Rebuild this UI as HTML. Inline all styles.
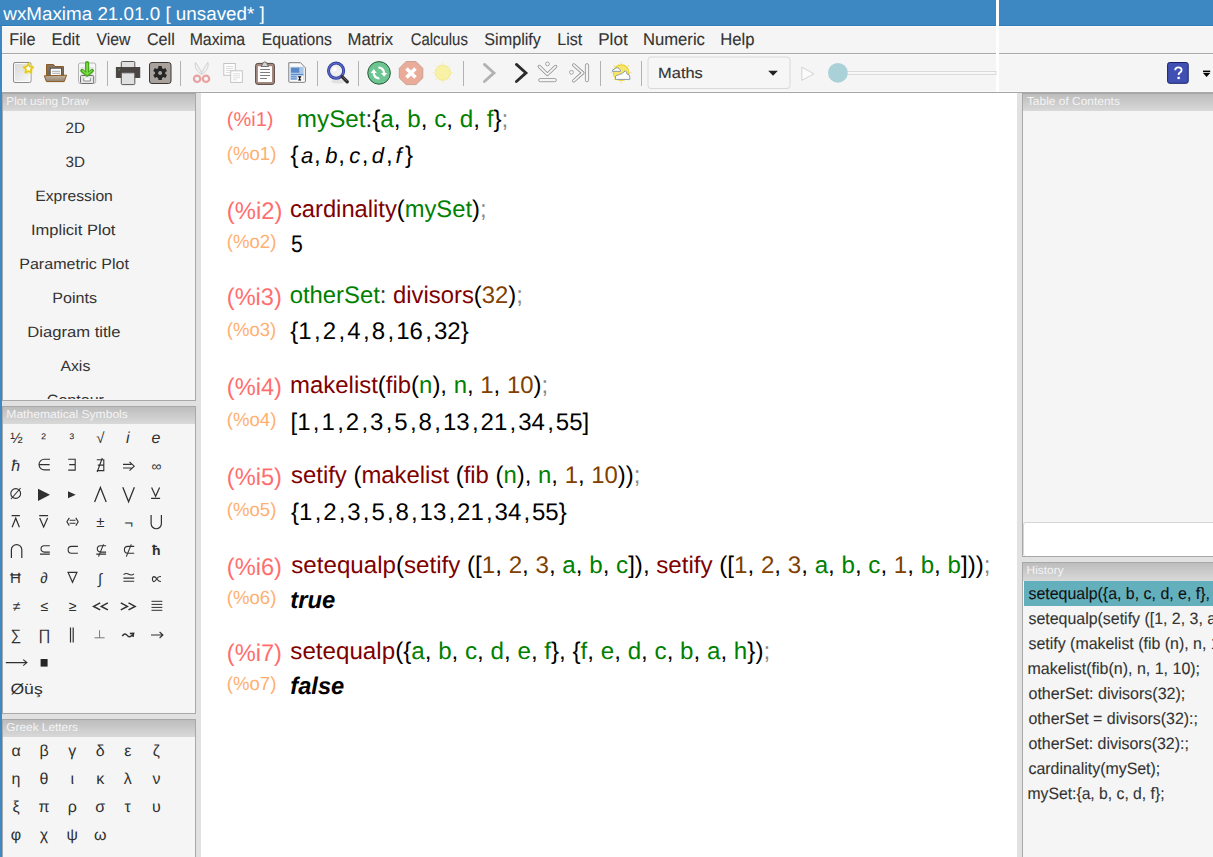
<!DOCTYPE html>
<html><head><meta charset="utf-8"><title>wxMaxima</title>
<style>
html,body{margin:0;padding:0;width:1213px;height:857px;overflow:hidden;background:#f5f5f5;font-family:"Liberation Sans",sans-serif;}
.a{position:absolute;}
svg{position:absolute;left:0;top:0;}
</style></head><body>
<svg width="1213" height="857" viewBox="0 0 1213 857" font-family="Liberation Sans, sans-serif" text-rendering="geometricPrecision">
<defs>
  <linearGradient id="cap" x1="0" y1="0" x2="0" y2="1">
    <stop offset="0" stop-color="#bdbdbd"/><stop offset="1" stop-color="#d9d9d9"/>
  </linearGradient>
  <clipPath id="clipDraw"><rect x="3" y="111" width="192" height="288"/></clipPath>
  <clipPath id="clipRight"><rect x="1023" y="93" width="190" height="764"/></clipPath>
</defs>
<!-- title bar -->
<rect x="0" y="0" width="1213" height="25" fill="#3d88c3"/>
<rect x="0" y="25" width="1213" height="1" fill="#2f7bb8"/>
<!-- menubar -->
<rect x="0" y="26" width="1213" height="27" fill="#f5f5f5"/>
<rect x="0" y="26" width="1213" height="1" fill="#fdfdfd"/>
<rect x="0" y="53" width="1213" height="1" fill="#a9a9a9"/>
<!-- toolbar -->
<rect x="0" y="54" width="1213" height="38" fill="#f5f5f5"/>
<rect x="0" y="54" width="1213" height="1" fill="#fafafa"/>
<rect x="0" y="91" width="1213" height="1" fill="#f9f9f9"/>
<rect x="0" y="92" width="1213" height="1" fill="#a6a6a6"/>
<!-- left blue strip -->
<rect x="0" y="26" width="2" height="831" fill="#3d88c3"/>
<!-- left dock -->
<rect x="2" y="93" width="199" height="764" fill="#e1e1e1"/>
<rect x="2" y="93" width="194" height="308" fill="#a8a8a8"/>
<rect x="3" y="94" width="192" height="17" fill="url(#cap)"/>
<rect x="3" y="111" width="192" height="289" fill="#f5f5f5"/>
<rect x="2" y="406" width="194" height="308" fill="#a8a8a8"/>
<rect x="3" y="407" width="192" height="17" fill="url(#cap)"/>
<rect x="3" y="424" width="192" height="289" fill="#f5f5f5"/>
<rect x="2" y="719" width="194" height="138" fill="#a8a8a8"/>
<rect x="3" y="720" width="192" height="17" fill="url(#cap)"/>
<rect x="3" y="737" width="192" height="120" fill="#f5f5f5"/>
<!-- worksheet -->
<rect x="201" y="93" width="816" height="764" fill="#ffffff"/>
<!-- right dock -->
<rect x="1017" y="93" width="196" height="764" fill="#e1e1e1"/>
<rect x="1022" y="93" width="191" height="464" fill="#a8a8a8"/>
<rect x="1023" y="94" width="190" height="17" fill="url(#cap)"/>
<rect x="1023" y="111" width="190" height="445" fill="#f5f5f5"/>
<rect x="1023" y="522" width="200" height="34" rx="3" fill="#d6d6d6"/>
<rect x="1024" y="523" width="199" height="33" rx="2" fill="#ffffff"/>
<rect x="1022" y="562" width="191" height="295" fill="#a8a8a8"/>
<rect x="1023" y="563" width="190" height="18" fill="url(#cap)"/>
<rect x="1023" y="581" width="190" height="276" fill="#f5f5f5"/>
<rect x="1024" y="581" width="189" height="25" fill="#64afbc"/>
<!-- white vertical line at top -->
<rect x="996" y="0" width="3" height="92" fill="#ffffff"/>
<g id="toolbar">
<defs>
  <linearGradient id="pg" x1="0" y1="0" x2="1" y2="1"><stop offset="0" stop-color="#d6d6d6"/><stop offset="1" stop-color="#fafafa"/></linearGradient>
  <linearGradient id="fb" x1="0" y1="0" x2="0" y2="1"><stop offset="0" stop-color="#8b7560"/><stop offset="1" stop-color="#6e604f"/></linearGradient>
  <linearGradient id="ff" x1="0" y1="0" x2="0" y2="1"><stop offset="0" stop-color="#c7b9a6"/><stop offset="1" stop-color="#8f7f6b"/></linearGradient>
</defs>
<!-- new document -->
<rect x="13.5" y="62.5" width="17.5" height="20" rx="1.5" fill="url(#pg)" stroke="#8c8c8c" stroke-width="1"/>
<rect x="14.5" y="63.5" width="15.5" height="18" rx="1" fill="none" stroke="#ffffff" stroke-width="1" opacity="0.8"/>
<circle cx="28.4" cy="68.6" r="5.8" fill="#f0e070" opacity="0.35"/>
<path d="M28.40 63.60 L29.87 66.58 L33.16 67.05 L30.78 69.37 L31.34 72.65 L28.40 71.10 L25.46 72.65 L26.02 69.37 L23.64 67.05 L26.93 66.58 Z" fill="#ffffff" stroke="#e4cc1a" stroke-width="1.7" stroke-linejoin="round"/>
<!-- open folder -->
<path d="M46.5 81 L46.5 64.5 L53.5 64.5 L55 66.5 L63.5 66.5 L63.5 81 Z" fill="url(#fb)" stroke="#8a5c22" stroke-width="1"/>
<rect x="50.2" y="68.2" width="11.4" height="9" fill="#ffffff" stroke="#3c3c3c" stroke-width="0.8"/>
<rect x="52" y="70.8" width="8" height="0.9" fill="#9aa0a0"/>
<rect x="52" y="72.8" width="8" height="0.9" fill="#9aa0a0"/>
<path d="M44.3 75.8 L66.6 75.2 L64.2 81.6 L46.4 81.6 Z" fill="url(#ff)" stroke="#8a5c22" stroke-width="1" stroke-linejoin="round"/>
<!-- save cabinet -->
<rect x="78.5" y="63" width="17.2" height="20.5" rx="2" fill="#f6f6f6" stroke="#b4b4b4" stroke-width="1"/>
<rect x="80.8" y="67" width="12.6" height="8" fill="#e4e4e4"/>
<rect x="80.5" y="75.5" width="13.2" height="8" rx="1" fill="#e6e6e6" stroke="#6e6e6e" stroke-width="1"/>
<path d="M83.8 78.3 L83.8 81 L90.4 81 L90.4 78.3" fill="#ffffff" stroke="#8a8a8a" stroke-width="1"/>
<path d="M87.1 63 L87.1 74" stroke="#49a81a" stroke-width="4.2" stroke-linecap="round"/>
<path d="M82 70.6 L87.1 75 L92.2 70.6" fill="none" stroke="#49a81a" stroke-width="3.6" stroke-linecap="round" stroke-linejoin="round"/>
<path d="M87.1 63.5 L87.1 73.5" stroke="#7ee04a" stroke-width="1.6" stroke-linecap="round"/>
<path d="M82.5 70.8 L87.1 74.5 L91.7 70.8" fill="none" stroke="#7ee04a" stroke-width="1.2" stroke-linecap="round"/>
<!-- separators -->
<rect x="107" y="61" width="1" height="25" fill="#b2b2b2"/>
<rect x="180" y="61" width="1" height="25" fill="#b2b2b2"/>
<rect x="317" y="61" width="1" height="25" fill="#b2b2b2"/>
<rect x="358" y="61" width="1" height="25" fill="#b2b2b2"/>
<rect x="463" y="61" width="1" height="25" fill="#b2b2b2"/>
<rect x="600" y="61" width="1" height="25" fill="#b2b2b2"/>
<rect x="641" y="61" width="1" height="25" fill="#b2b2b2"/>
<!-- printer -->
<rect x="121.3" y="61.5" width="13.5" height="7" rx="1" fill="#e0e0e0" stroke="#5a5552" stroke-width="1"/>
<rect x="116.3" y="67.5" width="23.5" height="10" fill="#4a4542" stroke="#3a3634" stroke-width="0.8"/>
<rect x="118.5" y="69.2" width="1.2" height="1.2" fill="#3ec060"/>
<rect x="121.3" y="72.8" width="13.5" height="11.8" rx="1" fill="#e0e0e0" stroke="#5a5552" stroke-width="1"/>
<!-- preferences gear -->
<rect x="149.5" y="62.5" width="21.5" height="21" rx="2.5" fill="#a9a19c" stroke="#3c3836" stroke-width="1"/>
<g transform="translate(160.1 73)" fill="#262626">
  <circle r="5.2"/>
  <rect x="-1.8" y="-7" width="3.6" height="14" rx="0.5"/>
  <rect x="-1.8" y="-7" width="3.6" height="14" rx="0.5" transform="rotate(60)"/>
  <rect x="-1.8" y="-7" width="3.6" height="14" rx="0.5" transform="rotate(120)"/>
  <circle r="2" fill="#a9a19c"/>
</g>
<!-- scissors (disabled) -->
<path d="M195.5 62.5 C194 67 197 71 201.2 74.5 L202 73.2 C199.5 69 197.5 65 195.5 62.5 Z" fill="#f3f3f3" stroke="#c4c4c4" stroke-width="0.8"/>
<path d="M207.8 62.5 C209.2 67 206.3 71 202 74.5 L201.2 73.2 C203.8 69 205.8 65 207.8 62.5 Z" fill="#f3f3f3" stroke="#c4c4c4" stroke-width="0.8"/>
<circle cx="197.1" cy="78.8" r="3.2" fill="none" stroke="#e8a2a2" stroke-width="2.2"/>
<circle cx="206" cy="78.8" r="3.2" fill="none" stroke="#e8a2a2" stroke-width="2.2"/>
<!-- copy (disabled) -->
<rect x="223.8" y="63.5" width="11.5" height="11.8" fill="#ffffff" stroke="#c4c4c4" stroke-width="1"/>
<rect x="226" y="66.2" width="7" height="0.7" fill="#cfcfcf"/><rect x="226" y="68.2" width="7" height="0.7" fill="#cfcfcf"/><rect x="226" y="70.2" width="7" height="0.7" fill="#cfcfcf"/><rect x="226" y="72.2" width="4" height="0.7" fill="#cfcfcf"/>
<rect x="230.7" y="70.8" width="11.6" height="11.6" fill="#ffffff" stroke="#c4c4c4" stroke-width="1"/>
<rect x="232.8" y="73.5" width="7.2" height="0.7" fill="#cfcfcf"/><rect x="232.8" y="75.5" width="7.2" height="0.7" fill="#cfcfcf"/><rect x="232.8" y="77.5" width="7.2" height="0.7" fill="#cfcfcf"/><rect x="232.8" y="79.5" width="4" height="0.7" fill="#cfcfcf"/>
<!-- paste clipboard -->
<rect x="255.6" y="63.4" width="18.8" height="21" rx="2.2" fill="#a48a80" stroke="#574943" stroke-width="1"/>
<rect x="257.9" y="66.2" width="14.1" height="15.8" fill="#ffffff"/>
<path d="M261 66.5 L262.5 64.3 A2.3 2.3 0 0 1 267.2 64.3 L268.7 66.5 Z" fill="#d4d4d4" stroke="#555" stroke-width="0.8"/>
<rect x="260.1" y="69.1" width="9.9" height="0.9" fill="#6e6e6e"/>
<rect x="260.1" y="72.1" width="9.9" height="0.9" fill="#6e6e6e"/>
<rect x="260.1" y="75.1" width="9.9" height="0.9" fill="#6e6e6e"/>
<rect x="260.1" y="78.1" width="6.8" height="0.9" fill="#6e6e6e"/>
<!-- export doc -->
<path d="M288.8 62.7 L300.5 62.7 L305.4 67.8 L305.4 81.5 Q305.4 82.3 304.6 82.3 L289.6 82.3 Q288.8 82.3 288.8 81.5 Z" fill="#fbfbfb" stroke="#7c7c7c" stroke-width="1"/>
<rect x="290.3" y="66.8" width="13.4" height="13.2" fill="#aac6e6"/>
<rect x="291" y="67.8" width="8.3" height="4.9" fill="#5a88c6"/>
<rect x="291" y="74" width="12.4" height="0.9" fill="#5a88c6"/>
<rect x="291" y="76.3" width="5.5" height="0.9" fill="#5a88c6"/>
<rect x="291" y="78.4" width="5.5" height="0.9" fill="#5a88c6"/>
<rect x="297.5" y="75.8" width="5.9" height="5.6" fill="#ffffff"/>
<path d="M298.2 76.8 L301.2 76.8 M299.7 76.8 L299.7 80 M298.2 80 L301.2 80" stroke="#000" stroke-width="1.2"/>
<!-- find -->
<ellipse cx="338" cy="81.5" rx="7" ry="2" fill="#000" opacity="0.08"/>
<circle cx="336.1" cy="70.7" r="7.6" fill="#eeeeee" stroke="#2d3c98" stroke-width="3"/>
<circle cx="336.1" cy="70.7" r="7.6" fill="none" stroke="#5a68c8" stroke-width="1.4"/>
<circle cx="334.6" cy="69" r="2.2" fill="#ffffff" opacity="0.9"/>
<path d="M342.3 76.9 L347.2 81.8" stroke="#2e2a28" stroke-width="3.4" stroke-linecap="round"/>
<path d="M342.6 76.6 L346.8 80.8" stroke="#6a625c" stroke-width="1" stroke-linecap="round"/>
<!-- reload -->
<circle cx="379.05" cy="72.9" r="11.3" fill="#6dc592" stroke="#2b5a3b" stroke-width="1"/>
<path d="M378.4 67.7 A5.3 5.3 0 0 1 384.1 73.2" fill="none" stroke="#fff" stroke-width="2.3"/>
<path d="M381 73 L387.2 73 L384.1 76.8 Z" fill="#fff"/>
<path d="M379.4 78.3 A5.3 5.3 0 0 1 373.7 72.8" fill="none" stroke="#fff" stroke-width="2.3"/>
<path d="M370.7 72.9 L376.8 72.9 L373.75 69.1 Z" fill="#fff"/>
<!-- interrupt -->
<path d="M406.1 61.5 L416 61.5 L422.8 68.3 L422.8 77.9 L416 84.6 L406.1 84.6 L399.3 77.9 L399.3 68.3 Z" fill="#e9ac98" stroke="#c4958a" stroke-width="0.8"/>
<path d="M406.5 68.5 L415.5 77.5 M415.5 68.5 L406.5 77.5" stroke="#fff" stroke-width="3.6" stroke-linecap="butt"/>
<!-- sun (disabled) -->
<g stroke="#f6eeb8" stroke-width="1.2">
<path d="M442.8 62.5 L442.8 64 M442.8 81.5 L442.8 83 M432.5 72.7 L434 72.7 M451.5 72.7 L453 72.7 M435.5 65.4 L436.5 66.4 M449.1 79 L450.1 80 M435.5 80 L436.5 79 M449.1 66.4 L450.1 65.4"/>
</g>
<circle cx="442.8" cy="72.7" r="7.6" fill="#f9f1a6" stroke="#f4e88e" stroke-width="1"/>
<!-- chevrons -->
<path d="M484.4 64.4 L494 72.9 L484.4 81.5" fill="none" stroke="#b2b2b2" stroke-width="2.8" stroke-linecap="round" stroke-linejoin="miter"/>
<path d="M516.4 64.4 L526 72.9 L516.4 81.5" fill="none" stroke="#2b2b2b" stroke-width="2.8" stroke-linecap="round" stroke-linejoin="miter"/>
<!-- step down -->
<path d="M539.3 66.5 L547.4 74.4 L555.6 66.5" fill="none" stroke="#8e8e8e" stroke-width="3.4" stroke-linecap="round" stroke-linejoin="round"/>
<path d="M539.3 66.5 L547.4 74.4 L555.6 66.5" fill="none" stroke="#f4f4f4" stroke-width="1.8" stroke-linecap="round" stroke-linejoin="round"/>
<circle cx="547.5" cy="63.9" r="1.9" fill="#fafafa" stroke="#8e8e8e" stroke-width="0.8"/>
<rect x="538.6" y="78.5" width="17.8" height="3.2" rx="1.6" fill="#f4f4f4" stroke="#8e8e8e" stroke-width="0.8"/>
<!-- step to end -->
<path d="M573.8 65 L582.8 72.9 L573.8 80.8" fill="none" stroke="#8e8e8e" stroke-width="3.4" stroke-linecap="round" stroke-linejoin="round"/>
<path d="M573.8 65 L582.8 72.9 L573.8 80.8" fill="none" stroke="#f4f4f4" stroke-width="1.8" stroke-linecap="round" stroke-linejoin="round"/>
<circle cx="571.5" cy="72.3" r="1.9" fill="#fafafa" stroke="#8e8e8e" stroke-width="0.8"/>
<rect x="585.4" y="63.6" width="3.2" height="18.2" rx="1.6" fill="#f4f4f4" stroke="#8e8e8e" stroke-width="0.8"/>
<!-- weather -->
<g stroke="#f2dc50" stroke-width="1.1" opacity="0.8">
<path d="M621.2 62.2 L621.2 63.6 M621.2 81.8 L621.2 83.2 M610.7 72.7 L612.1 72.7 M630.3 72.7 L631.7 72.7 M613.8 65.3 L614.8 66.3 M627.6 79.1 L628.6 80.1 M613.8 80.1 L614.8 79.1 M627.6 66.3 L628.6 65.3"/>
</g>
<circle cx="621.2" cy="72.7" r="7.8" fill="#f6e66c" stroke="#eed22c" stroke-width="1.2"/>
<path d="M612.3 71.3 Q612.3 69.3 614.5 69.2 Q615.4 67.3 617.5 67.8 Q619.3 68 619.8 69.6 Q620.8 70 620.5 71.3 Z" fill="#ffffff" stroke="#6d87a3" stroke-width="0.8"/>
<path d="M615.5 79.4 L615.5 76.5 Q616 75 618.5 75 Q619.5 73.8 621.5 74 L625.3 70.8 Q627 72 627 74 Q629.8 74.2 629.8 77 L629.8 79.4 Z" fill="#ffffff" stroke="#6d87a3" stroke-width="0.8"/>
<!-- combobox -->
<rect x="648" y="57" width="142" height="31.5" rx="3" fill="#f6f6f6" stroke="#d9d9d9" stroke-width="1"/>
<path d="M768.2 70.8 L777.9 70.8 L773.05 75.8 Z" fill="#222"/>
<!-- play -->
<path d="M801.8 67.2 L814 73.8 L801.8 80.4 Z" fill="#fbfbfb" stroke="#cfcfcf" stroke-width="0.9" stroke-linejoin="round"/>
<!-- slider -->
<rect x="840" y="71.5" width="156" height="3" fill="#f8f8f8" stroke="#dadada" stroke-width="1"/>
<circle cx="837.9" cy="72.8" r="9.9" fill="#aad1d8"/>
<!-- help -->
<rect x="1167.6" y="62.5" width="20.6" height="20.8" rx="2" fill="#4050b2" stroke="#1a2168" stroke-width="1"/>
<path d="M1175.2 70.2 Q1175.2 67.4 1178.4 67.4 Q1181.6 67.4 1181.6 70 Q1181.6 71.6 1179.8 72.6 Q1178.6 73.3 1178.6 75" fill="none" stroke="#fff" stroke-width="1.8"/>
<rect x="1177.5" y="76.8" width="2.3" height="2.3" fill="#fff"/>
<!-- toolbar overflow -->
<rect x="1203" y="70.6" width="7.2" height="1.6" fill="#000"/>
<path d="M1203 73 L1210.2 73 L1206.6 77 Z" fill="#000"/>
</g>

<text x="16.4" y="443" font-size="15" text-anchor="middle" fill="#303030" >½</text>
<text x="43.6" y="443" font-size="14" text-anchor="middle" fill="#303030" >²</text>
<text x="71.9" y="443" font-size="14" text-anchor="middle" fill="#303030" >³</text>
<text x="100.4" y="443" font-size="15" text-anchor="middle" fill="#303030" >√</text>
<text x="127.7" y="443" font-size="16" text-anchor="middle" fill="#303030" font-style="italic" >i</text>
<text x="156" y="443" font-size="16" text-anchor="middle" fill="#303030" font-style="italic" >e</text>
<text x="15.7" y="470.7" font-size="16" text-anchor="middle" fill="#303030" font-style="italic" >ħ</text>
<path d="M50 459.3 H44.3 A5.15 5.15 0 0 0 44.3 469.9 H50 M39.2 464.6 H49.6" fill="none" stroke="#303030" stroke-width="1.1" />
<path d="M68.2 459.2 H75.2 V470.1 H68.2 M69.2 464.6 H75.2" fill="none" stroke="#303030" stroke-width="1.1" />
<path d="M96.8 459.7 H103.8 V470.6 H96.8 M97.8 465.1 H103.8 M102.3 458 L97.2 472" fill="none" stroke="#303030" stroke-width="1.1" />
<path d="M123 464.4 H131.5 M123 468 H131.5 M129.5 461.8 L134.2 466.2 L129.5 470.6" fill="none" stroke="#303030" stroke-width="1.1" />
<text x="156.5" y="470.5" font-size="14" text-anchor="middle" fill="#303030" >∞</text>
<path d="M11 499 L20.6 488" fill="none" stroke="#303030" stroke-width="1.1" />
<circle cx="15.7" cy="493.5" r="4.9" fill="none" stroke="#303030" stroke-width="1.1"/>
<path d="M38 488.7 L50 494.8 L38 500.9 Z" fill="#303030" stroke="none" stroke-width="0" />
<path d="M68 491.2 L75.7 494.75 L68 498.3 Z" fill="#303030" stroke="none" stroke-width="0" />
<path d="M94.6 502 L100.4 487.6 L106.2 502" fill="none" stroke="#303030" stroke-width="1.3" />
<path d="M122.8 487.3 L128.6 501.7 L134.4 487.3" fill="none" stroke="#303030" stroke-width="1.3" />
<path d="M151.6 487.5 L155.6 496.3 L159.6 487.5 M151.1 498.3 H160.1" fill="none" stroke="#303030" stroke-width="1.2" />
<path d="M11.6 515.6 H19.9 M12.1 527.2 L15.75 518.2 L19.4 527.2" fill="none" stroke="#303030" stroke-width="1.2" />
<path d="M39.2 515.6 H48.1 M39.7 518 L43.65 527 L47.6 518" fill="none" stroke="#303030" stroke-width="1.2" />
<path d="M69.6 520.2 H75.5 M69.6 523.3 H75.5 M69.3 517.9 L66.9 521.75 L69.3 525.6 M75.8 517.9 L78.2 521.75 L75.8 525.6" fill="none" stroke="#303030" stroke-width="1.1" />
<text x="100.4" y="527" font-size="15" text-anchor="middle" fill="#303030" >±</text>
<text x="128.6" y="527.5" font-size="15" text-anchor="middle" fill="#303030" >¬</text>
<path d="M151.1 514.9 V523.6 A5.15 5.15 0 0 0 161.4 523.6 V514.9" fill="none" stroke="#303030" stroke-width="1.2" />
<path d="M11.4 558.1 V549.8 A5.2 5.2 0 0 1 21.8 549.8 V558.1" fill="none" stroke="#303030" stroke-width="1.2" />
<path d="M49.8 545.7 H44.2 A3.2 3.2 0 0 0 44.2 552.1 H49.8 M40 554.1 H49.8" fill="none" stroke="#303030" stroke-width="1.1" />
<path d="M77.9 546.4 H71.5 A3.4 3.4 0 0 0 71.5 553.2 H77.9" fill="none" stroke="#303030" stroke-width="1.1" />
<path d="M106.1 545.7 H100.5 A3.2 3.2 0 0 0 100.5 552.1 H106.1 M96.3 554.1 H106.1 M103.5 544.4 L98.5 556.6" fill="none" stroke="#303030" stroke-width="1.1" />
<path d="M134.2 546.4 H127.8 A3.4 3.4 0 0 0 127.8 553.2 H134.2 M131.3 544.4 L126.3 556.6" fill="none" stroke="#303030" stroke-width="1.1" />
<text x="156.2" y="554.8" font-size="14" text-anchor="middle" fill="#303030" font-weight="bold" >ħ</text>
<text x="15.5" y="582.6" font-size="15" text-anchor="middle" fill="#303030" >Ħ</text>
<text x="44" y="582.6" font-size="15" text-anchor="middle" fill="#303030" >∂</text>
<path d="M68.1 572.4 H76.9 L72.5 582.2 Z" fill="none" stroke="#303030" stroke-width="1.2" />
<text x="100" y="583.5" font-size="15" text-anchor="middle" fill="#303030" >∫</text>
<path d="M123.6 574.6 Q126 572.6 128.8 574.3 Q131.5 575.9 134 573.9 M123.4 578.1 H134.2 M123.4 581.2 H134.2" fill="none" stroke="#303030" stroke-width="1.1" />
<path d="M160.9 576.6 Q158.2 576.2 156.6 579 Q155 581.8 153.8 581.6 Q152.3 581.3 152.4 579 Q152.5 576.6 154 576.6 Q155.6 576.7 157.2 579.2 Q158.7 581.7 160.9 581.5" fill="none" stroke="#303030" stroke-width="1.1" />
<text x="16.6" y="610.8" font-size="14" text-anchor="middle" fill="#303030" >≠</text>
<text x="44.3" y="611" font-size="14" text-anchor="middle" fill="#303030" >≤</text>
<text x="72.5" y="611" font-size="14" text-anchor="middle" fill="#303030" >≥</text>
<path d="M100.2 602.9 L93.6 606.4 L100.2 609.9 M107.9 602.9 L101.3 606.4 L107.9 609.9" fill="none" stroke="#303030" stroke-width="1.5" />
<path d="M120.8 602.9 L127.4 606.4 L120.8 609.9 M128.5 602.9 L135.1 606.4 L128.5 609.9" fill="none" stroke="#303030" stroke-width="1.5" />
<path d="M151.5 601.3 H162.3 M151.5 604.4 H162.3 M151.5 607.4 H162.3 M151.5 610.3 H162.3" fill="none" stroke="#303030" stroke-width="1.0" />
<text x="15.9" y="640" font-size="15" text-anchor="middle" fill="#303030" >∑</text>
<text x="44.4" y="639.8" font-size="15" text-anchor="middle" fill="#303030" >∏</text>
<path d="M70.5 627.4 V642.5 M73.2 627.4 V642.5" fill="none" stroke="#303030" stroke-width="1.2" />
<path d="M99.55 630.2 V637.8 M94.5 637.8 H104.6" fill="none" stroke="#7a7a7a" stroke-width="1.0" />
<path d="M122.3 636.2 Q124.6 632.2 127.2 635.4 Q129.6 638.4 132.6 634.6 M129.8 633.6 L133.6 633.4 L133 637" fill="none" stroke="#303030" stroke-width="1.5" />
<path d="M151 635 H162.6 M159.6 632 L162.9 635 L159.6 638" fill="none" stroke="#303030" stroke-width="1.1" />
<path d="M5.8 662.6 H26.6 M23.2 659.6 L26.9 662.6 L23.2 665.6" fill="none" stroke="#303030" stroke-width="1.1" />
<path d="M40.6 659 H47.6 V666.6 H40.6 Z" fill="#262626" stroke="none" stroke-width="0" />
<text x="10.4" y="694" font-size="15" text-anchor="start" fill="#303030" textLength="32.3" lengthAdjust="spacingAndGlyphs">Øüş</text>
<text x="16" y="756" font-size="16" text-anchor="middle" fill="#303030" >α</text>
<text x="44" y="756" font-size="16" text-anchor="middle" fill="#303030" >β</text>
<text x="72.2" y="756" font-size="16" text-anchor="middle" fill="#303030" >γ</text>
<text x="100.3" y="756" font-size="16" text-anchor="middle" fill="#303030" >δ</text>
<text x="127.7" y="756" font-size="16" text-anchor="middle" fill="#303030" >ε</text>
<text x="156.4" y="756" font-size="16" text-anchor="middle" fill="#303030" >ζ</text>
<text x="16" y="784.2" font-size="16" text-anchor="middle" fill="#303030" >η</text>
<text x="44" y="784.2" font-size="16" text-anchor="middle" fill="#303030" >θ</text>
<text x="72.2" y="784.2" font-size="16" text-anchor="middle" fill="#303030" >ι</text>
<text x="100.3" y="784.2" font-size="16" text-anchor="middle" fill="#303030" >κ</text>
<text x="127.7" y="784.2" font-size="16" text-anchor="middle" fill="#303030" >λ</text>
<text x="156.4" y="784.2" font-size="16" text-anchor="middle" fill="#303030" >ν</text>
<text x="16" y="812.3" font-size="16" text-anchor="middle" fill="#303030" >ξ</text>
<text x="44" y="812.3" font-size="16" text-anchor="middle" fill="#303030" >π</text>
<text x="72.2" y="812.3" font-size="16" text-anchor="middle" fill="#303030" >ρ</text>
<text x="100.3" y="812.3" font-size="16" text-anchor="middle" fill="#303030" >σ</text>
<text x="127.7" y="812.3" font-size="16" text-anchor="middle" fill="#303030" >τ</text>
<text x="156.4" y="812.3" font-size="16" text-anchor="middle" fill="#303030" >υ</text>
<text x="16" y="839.8" font-size="16" text-anchor="middle" fill="#303030" >φ</text>
<text x="44" y="839.8" font-size="16" text-anchor="middle" fill="#303030" >χ</text>
<text x="72.2" y="839.8" font-size="16" text-anchor="middle" fill="#303030" >ψ</text>
<text x="100.3" y="839.8" font-size="16" text-anchor="middle" fill="#303030" >ω</text>
<text x="3.32" y="19.8" font-size="18.5" fill="#ffffff" textLength="261.44" lengthAdjust="spacingAndGlyphs" >wxMaxima 21.01.0 [ unsaved* ]</text>
<text x="9.35" y="45" font-size="17" fill="#333333" textLength="26.09" lengthAdjust="spacingAndGlyphs" stroke="#333333" stroke-width="0.12">File</text>
<text x="51.54" y="45" font-size="17" fill="#333333" textLength="28.20" lengthAdjust="spacingAndGlyphs" stroke="#333333" stroke-width="0.12">Edit</text>
<text x="96.50" y="45" font-size="17" fill="#333333" textLength="33.83" lengthAdjust="spacingAndGlyphs" stroke="#333333" stroke-width="0.12">View</text>
<text x="147.00" y="45" font-size="17" fill="#333333" textLength="27.74" lengthAdjust="spacingAndGlyphs" stroke="#333333" stroke-width="0.12">Cell</text>
<text x="189.67" y="45" font-size="17" fill="#333333" textLength="55.52" lengthAdjust="spacingAndGlyphs" stroke="#333333" stroke-width="0.12">Maxima</text>
<text x="261.87" y="45" font-size="17" fill="#333333" textLength="69.99" lengthAdjust="spacingAndGlyphs" stroke="#333333" stroke-width="0.12">Equations</text>
<text x="347.51" y="45" font-size="17" fill="#333333" textLength="45.59" lengthAdjust="spacingAndGlyphs" stroke="#333333" stroke-width="0.12">Matrix</text>
<text x="410.80" y="45" font-size="17" fill="#333333" textLength="57.04" lengthAdjust="spacingAndGlyphs" stroke="#333333" stroke-width="0.12">Calculus</text>
<text x="484.30" y="45" font-size="17" fill="#333333" textLength="56.62" lengthAdjust="spacingAndGlyphs" stroke="#333333" stroke-width="0.12">Simplify</text>
<text x="557.36" y="45" font-size="17" fill="#333333" textLength="24.88" lengthAdjust="spacingAndGlyphs" stroke="#333333" stroke-width="0.12">List</text>
<text x="598.19" y="45" font-size="17" fill="#333333" textLength="29.53" lengthAdjust="spacingAndGlyphs" stroke="#333333" stroke-width="0.12">Plot</text>
<text x="643.02" y="45" font-size="17" fill="#333333" textLength="61.89" lengthAdjust="spacingAndGlyphs" stroke="#333333" stroke-width="0.12">Numeric</text>
<text x="720.22" y="45" font-size="17" fill="#333333" textLength="34.22" lengthAdjust="spacingAndGlyphs" stroke="#333333" stroke-width="0.12">Help</text>
<text x="658.10" y="77.8" font-size="15" fill="#333333" textLength="44.74" lengthAdjust="spacingAndGlyphs" stroke="#333333" stroke-width="0.12">Maths</text>
<text x="6.35" y="104.7" font-size="11.5" fill="#f4f4f4" textLength="82.44" lengthAdjust="spacingAndGlyphs" >Plot using Draw</text>
<text x="6.35" y="417.9" font-size="11.5" fill="#f4f4f4" textLength="121.49" lengthAdjust="spacingAndGlyphs" >Mathematical Symbols</text>
<text x="6.35" y="730.9" font-size="11.5" fill="#f4f4f4" textLength="71.69" lengthAdjust="spacingAndGlyphs" >Greek Letters</text>
<text x="1026.90" y="104.7" font-size="11.5" fill="#f4f4f4" textLength="93.04" lengthAdjust="spacingAndGlyphs" >Table of Contents</text>
<text x="1026.60" y="573.9" font-size="11.5" fill="#f4f4f4" textLength="37.04" lengthAdjust="spacingAndGlyphs" >History</text>
<text x="65.60" y="133" font-size="15" fill="#333333" textLength="19.43" lengthAdjust="spacingAndGlyphs" clip-path="url(#clipDraw)">2D</text>
<text x="65.60" y="167" font-size="15" fill="#333333" textLength="19.43" lengthAdjust="spacingAndGlyphs" clip-path="url(#clipDraw)">3D</text>
<text x="35.25" y="201" font-size="15" fill="#333333" textLength="77.60" lengthAdjust="spacingAndGlyphs" clip-path="url(#clipDraw)">Expression</text>
<text x="30.90" y="235" font-size="15" fill="#333333" textLength="84.58" lengthAdjust="spacingAndGlyphs" clip-path="url(#clipDraw)">Implicit Plot</text>
<text x="19.23" y="268.7" font-size="15" fill="#333333" textLength="109.78" lengthAdjust="spacingAndGlyphs" clip-path="url(#clipDraw)">Parametric Plot</text>
<text x="52.23" y="302.9" font-size="15" fill="#333333" textLength="44.81" lengthAdjust="spacingAndGlyphs" clip-path="url(#clipDraw)">Points</text>
<text x="27.19" y="336.9" font-size="15" fill="#333333" textLength="93.39" lengthAdjust="spacingAndGlyphs" clip-path="url(#clipDraw)">Diagram title</text>
<text x="60.40" y="370.5" font-size="15" fill="#333333" textLength="29.93" lengthAdjust="spacingAndGlyphs" clip-path="url(#clipDraw)">Axis</text>
<text x="46.80" y="404.5" font-size="15" fill="#333333" textLength="57.19" lengthAdjust="spacingAndGlyphs" clip-path="url(#clipDraw)">Contour</text>
<text x="1028.50" y="599.1" font-size="16.5" fill="#111111" textLength="315.99" lengthAdjust="spacingAndGlyphs" stroke="#111111" stroke-width="0.12">setequalp({a, b, c, d, e, f}, {f, e, d, c, b, a, h});</text>
<text x="1028.50" y="624" font-size="16.5" fill="#333333" textLength="461.07" lengthAdjust="spacingAndGlyphs" stroke="#333333" stroke-width="0.12">setequalp(setify ([1, 2, 3, a, b, c]), setify ([1, 2, 3, a, b, c, 1, b, b]));</text>
<text x="1028.50" y="649" font-size="16.5" fill="#333333" textLength="232.70" lengthAdjust="spacingAndGlyphs" stroke="#333333" stroke-width="0.12">setify (makelist (fib (n), n, 1, 10));</text>
<text x="1027.53" y="674" font-size="16.5" fill="#333333" textLength="172.54" lengthAdjust="spacingAndGlyphs" stroke="#333333" stroke-width="0.12">makelist(fib(n), n, 1, 10);</text>
<text x="1028.50" y="698.8" font-size="16.5" fill="#333333" textLength="156.77" lengthAdjust="spacingAndGlyphs" stroke="#333333" stroke-width="0.12">otherSet: divisors(32);</text>
<text x="1028.50" y="723.9" font-size="16.5" fill="#333333" textLength="169.46" lengthAdjust="spacingAndGlyphs" stroke="#333333" stroke-width="0.12">otherSet = divisors(32):;</text>
<text x="1028.50" y="749" font-size="16.5" fill="#333333" textLength="160.36" lengthAdjust="spacingAndGlyphs" stroke="#333333" stroke-width="0.12">otherSet: divisors(32):;</text>
<text x="1028.50" y="774" font-size="16.5" fill="#333333" textLength="131.76" lengthAdjust="spacingAndGlyphs" stroke="#333333" stroke-width="0.12">cardinality(mySet);</text>
<text x="1027.55" y="799" font-size="16.5" fill="#333333" textLength="137.01" lengthAdjust="spacingAndGlyphs" stroke="#333333" stroke-width="0.12">mySet:{a, b, c, d, f};</text>
<text x="226.80" y="126.0" font-size="20" fill="#ff6e6e" textLength="46.66" lengthAdjust="spacingAndGlyphs" >(%i1)</text>
<text x="226.82" y="159.8" font-size="19" fill="#ffb070" textLength="49.50" lengthAdjust="spacingAndGlyphs" >(%o1)</text>
<text x="226.81" y="218.9" font-size="24" fill="#ff6e6e" textLength="55.58" lengthAdjust="spacingAndGlyphs" >(%i2)</text>
<text x="226.82" y="247.7" font-size="19" fill="#ffb070" textLength="49.50" lengthAdjust="spacingAndGlyphs" >(%o2)</text>
<text x="226.82" y="304.5" font-size="24" fill="#ff6e6e" textLength="54.95" lengthAdjust="spacingAndGlyphs" >(%i3)</text>
<text x="226.83" y="336.0" font-size="19" fill="#ffb070" textLength="49.39" lengthAdjust="spacingAndGlyphs" >(%o3)</text>
<text x="226.82" y="394.9" font-size="24" fill="#ff6e6e" textLength="55.16" lengthAdjust="spacingAndGlyphs" >(%i4)</text>
<text x="226.82" y="426.0" font-size="19" fill="#ffb070" textLength="49.50" lengthAdjust="spacingAndGlyphs" >(%o4)</text>
<text x="226.82" y="484.9" font-size="24" fill="#ff6e6e" textLength="55.16" lengthAdjust="spacingAndGlyphs" >(%i5)</text>
<text x="226.82" y="516.0" font-size="19" fill="#ffb070" textLength="49.50" lengthAdjust="spacingAndGlyphs" >(%o5)</text>
<text x="226.82" y="574.9" font-size="24" fill="#ff6e6e" textLength="55.16" lengthAdjust="spacingAndGlyphs" >(%i6)</text>
<text x="226.82" y="603.6" font-size="19" fill="#ffb070" textLength="49.50" lengthAdjust="spacingAndGlyphs" >(%o6)</text>
<text x="226.82" y="661.0" font-size="24" fill="#ff6e6e" textLength="55.16" lengthAdjust="spacingAndGlyphs" >(%i7)</text>
<text x="226.82" y="689.8" font-size="19" fill="#ffb070" textLength="49.50" lengthAdjust="spacingAndGlyphs" >(%o7)</text>
<text x="296.89" y="126.8" font-size="24" fill="#000" textLength="211.39" lengthAdjust="spacingAndGlyphs" ><tspan fill="#008000">mySet</tspan><tspan fill="#303030">:</tspan><tspan fill="#000000">{</tspan><tspan fill="#008000">a</tspan><tspan fill="#000000">, </tspan><tspan fill="#008000">b</tspan><tspan fill="#000000">, </tspan><tspan fill="#008000">c</tspan><tspan fill="#000000">, </tspan><tspan fill="#008000">d</tspan><tspan fill="#000000">, </tspan><tspan fill="#008000">f</tspan><tspan fill="#000000">}</tspan><tspan fill="#8a8a8a">;</tspan></text>
<text x="289.91" y="216.8" font-size="24" fill="#000" textLength="196.64" lengthAdjust="spacingAndGlyphs" ><tspan fill="#800000">cardinality</tspan><tspan fill="#000000">(</tspan><tspan fill="#008000">mySet</tspan><tspan fill="#000000">)</tspan><tspan fill="#8a8a8a">;</tspan></text>
<text x="289.71" y="302.5" font-size="24" fill="#000" textLength="233.15" lengthAdjust="spacingAndGlyphs" ><tspan fill="#008000">otherSet</tspan><tspan fill="#303030">: </tspan><tspan fill="#800000">divisors</tspan><tspan fill="#000000">(</tspan><tspan fill="#804000">32</tspan><tspan fill="#000000">)</tspan><tspan fill="#8a8a8a">;</tspan></text>
<text x="290.10" y="392.9" font-size="24" fill="#000" textLength="258.06" lengthAdjust="spacingAndGlyphs" ><tspan fill="#800000">makelist</tspan><tspan fill="#000000">(</tspan><tspan fill="#800000">fib</tspan><tspan fill="#000000">(</tspan><tspan fill="#008000">n</tspan><tspan fill="#000000">), </tspan><tspan fill="#008000">n</tspan><tspan fill="#000000">, </tspan><tspan fill="#804000">1</tspan><tspan fill="#000000">, </tspan><tspan fill="#804000">10</tspan><tspan fill="#000000">)</tspan><tspan fill="#8a8a8a">;</tspan></text>
<text x="291.00" y="482.9" font-size="24" fill="#000" textLength="349.36" lengthAdjust="spacingAndGlyphs" ><tspan fill="#800000">setify</tspan><tspan fill="#000000"> (</tspan><tspan fill="#800000">makelist</tspan><tspan fill="#000000"> (</tspan><tspan fill="#800000">fib</tspan><tspan fill="#000000"> (</tspan><tspan fill="#008000">n</tspan><tspan fill="#000000">), </tspan><tspan fill="#008000">n</tspan><tspan fill="#000000">, </tspan><tspan fill="#804000">1</tspan><tspan fill="#000000">, </tspan><tspan fill="#804000">10</tspan><tspan fill="#000000">))</tspan><tspan fill="#8a8a8a">;</tspan></text>
<text x="291.30" y="572.9" font-size="24" fill="#000" textLength="699.18" lengthAdjust="spacingAndGlyphs" ><tspan fill="#800000">setequalp</tspan><tspan fill="#000000">(</tspan><tspan fill="#800000">setify</tspan><tspan fill="#000000"> ([</tspan><tspan fill="#804000">1</tspan><tspan fill="#000000">, </tspan><tspan fill="#804000">2</tspan><tspan fill="#000000">, </tspan><tspan fill="#804000">3</tspan><tspan fill="#000000">, </tspan><tspan fill="#008000">a</tspan><tspan fill="#000000">, </tspan><tspan fill="#008000">b</tspan><tspan fill="#000000">, </tspan><tspan fill="#008000">c</tspan><tspan fill="#000000">]), </tspan><tspan fill="#800000">setify</tspan><tspan fill="#000000"> ([</tspan><tspan fill="#804000">1</tspan><tspan fill="#000000">, </tspan><tspan fill="#804000">2</tspan><tspan fill="#000000">, </tspan><tspan fill="#804000">3</tspan><tspan fill="#000000">, </tspan><tspan fill="#008000">a</tspan><tspan fill="#000000">, </tspan><tspan fill="#008000">b</tspan><tspan fill="#000000">, </tspan><tspan fill="#008000">c</tspan><tspan fill="#000000">, </tspan><tspan fill="#804000">1</tspan><tspan fill="#000000">, </tspan><tspan fill="#008000">b</tspan><tspan fill="#000000">, </tspan><tspan fill="#008000">b</tspan><tspan fill="#000000">]))</tspan><tspan fill="#8a8a8a">;</tspan></text>
<text x="290.30" y="658.9" font-size="24" fill="#000" textLength="479.88" lengthAdjust="spacingAndGlyphs" ><tspan fill="#800000">setequalp</tspan><tspan fill="#000000">({</tspan><tspan fill="#008000">a</tspan><tspan fill="#000000">, </tspan><tspan fill="#008000">b</tspan><tspan fill="#000000">, </tspan><tspan fill="#008000">c</tspan><tspan fill="#000000">, </tspan><tspan fill="#008000">d</tspan><tspan fill="#000000">, </tspan><tspan fill="#008000">e</tspan><tspan fill="#000000">, </tspan><tspan fill="#008000">f</tspan><tspan fill="#000000">}, {</tspan><tspan fill="#008000">f</tspan><tspan fill="#000000">, </tspan><tspan fill="#008000">e</tspan><tspan fill="#000000">, </tspan><tspan fill="#008000">d</tspan><tspan fill="#000000">, </tspan><tspan fill="#008000">c</tspan><tspan fill="#000000">, </tspan><tspan fill="#008000">b</tspan><tspan fill="#000000">, </tspan><tspan fill="#008000">a</tspan><tspan fill="#000000">, </tspan><tspan fill="#008000">h</tspan><tspan fill="#000000">})</tspan><tspan fill="#8a8a8a">;</tspan></text>
<text x="290.90" y="251.8" font-size="24" fill="#000" textLength="11.81" lengthAdjust="spacingAndGlyphs" >5</text>
<text x="290.31" y="607.6" font-size="24" font-style="italic" font-weight="bold" fill="#000" textLength="44.94" lengthAdjust="spacingAndGlyphs" >true</text>
<text x="290.30" y="693.8" font-size="24" font-style="italic" font-weight="bold" fill="#000" textLength="53.94" lengthAdjust="spacingAndGlyphs" >false</text>
<text x="290.30" y="339.3" font-size="24" fill="#000">{1<tspan dx="2.44">,</tspan><tspan dx="1.99">2</tspan><tspan dx="2.44">,</tspan><tspan dx="1.99">4</tspan><tspan dx="2.44">,</tspan><tspan dx="1.99">8</tspan><tspan dx="2.44">,</tspan><tspan dx="1.99">16</tspan><tspan dx="2.44">,</tspan><tspan dx="1.99">32}</tspan></text>
<text x="290.50" y="430" font-size="24" fill="#000">[1<tspan dx="2.34">,</tspan><tspan dx="1.92">1</tspan><tspan dx="2.34">,</tspan><tspan dx="1.92">2</tspan><tspan dx="2.34">,</tspan><tspan dx="1.92">3</tspan><tspan dx="2.34">,</tspan><tspan dx="1.92">5</tspan><tspan dx="2.34">,</tspan><tspan dx="1.92">8</tspan><tspan dx="2.34">,</tspan><tspan dx="1.92">13</tspan><tspan dx="2.34">,</tspan><tspan dx="1.92">21</tspan><tspan dx="2.34">,</tspan><tspan dx="1.92">34</tspan><tspan dx="2.34">,</tspan><tspan dx="1.92">55]</tspan></text>
<text x="291.00" y="520" font-size="24" fill="#000">{1<tspan dx="2.25">,</tspan><tspan dx="1.84">2</tspan><tspan dx="2.25">,</tspan><tspan dx="1.84">3</tspan><tspan dx="2.25">,</tspan><tspan dx="1.84">5</tspan><tspan dx="2.25">,</tspan><tspan dx="1.84">8</tspan><tspan dx="2.25">,</tspan><tspan dx="1.84">13</tspan><tspan dx="2.25">,</tspan><tspan dx="1.84">21</tspan><tspan dx="2.25">,</tspan><tspan dx="1.84">34</tspan><tspan dx="2.25">,</tspan><tspan dx="1.84">55}</tspan></text>
<text x="290.40" y="163.4" font-size="24" fill="#000">{</text>
<text x="301.00" y="163.4" font-size="22" font-style="italic" fill="#000">a</text>
<text x="314.00" y="163.4" font-size="24" fill="#000">,</text>
<text x="325.20" y="163.4" font-size="22" font-style="italic" fill="#000">b</text>
<text x="338.20" y="163.4" font-size="24" fill="#000">,</text>
<text x="349.30" y="163.4" font-size="22" font-style="italic" fill="#000">c</text>
<text x="361.80" y="163.4" font-size="24" fill="#000">,</text>
<text x="371.80" y="163.4" font-size="22" font-style="italic" fill="#000">d</text>
<text x="385.90" y="163.4" font-size="24" fill="#000">,</text>
<text x="395.40" y="163.4" font-size="22" font-style="italic" fill="#000">f</text>
<text x="405.00" y="163.4" font-size="24" fill="#000">}</text>
</svg>
</body></html>
